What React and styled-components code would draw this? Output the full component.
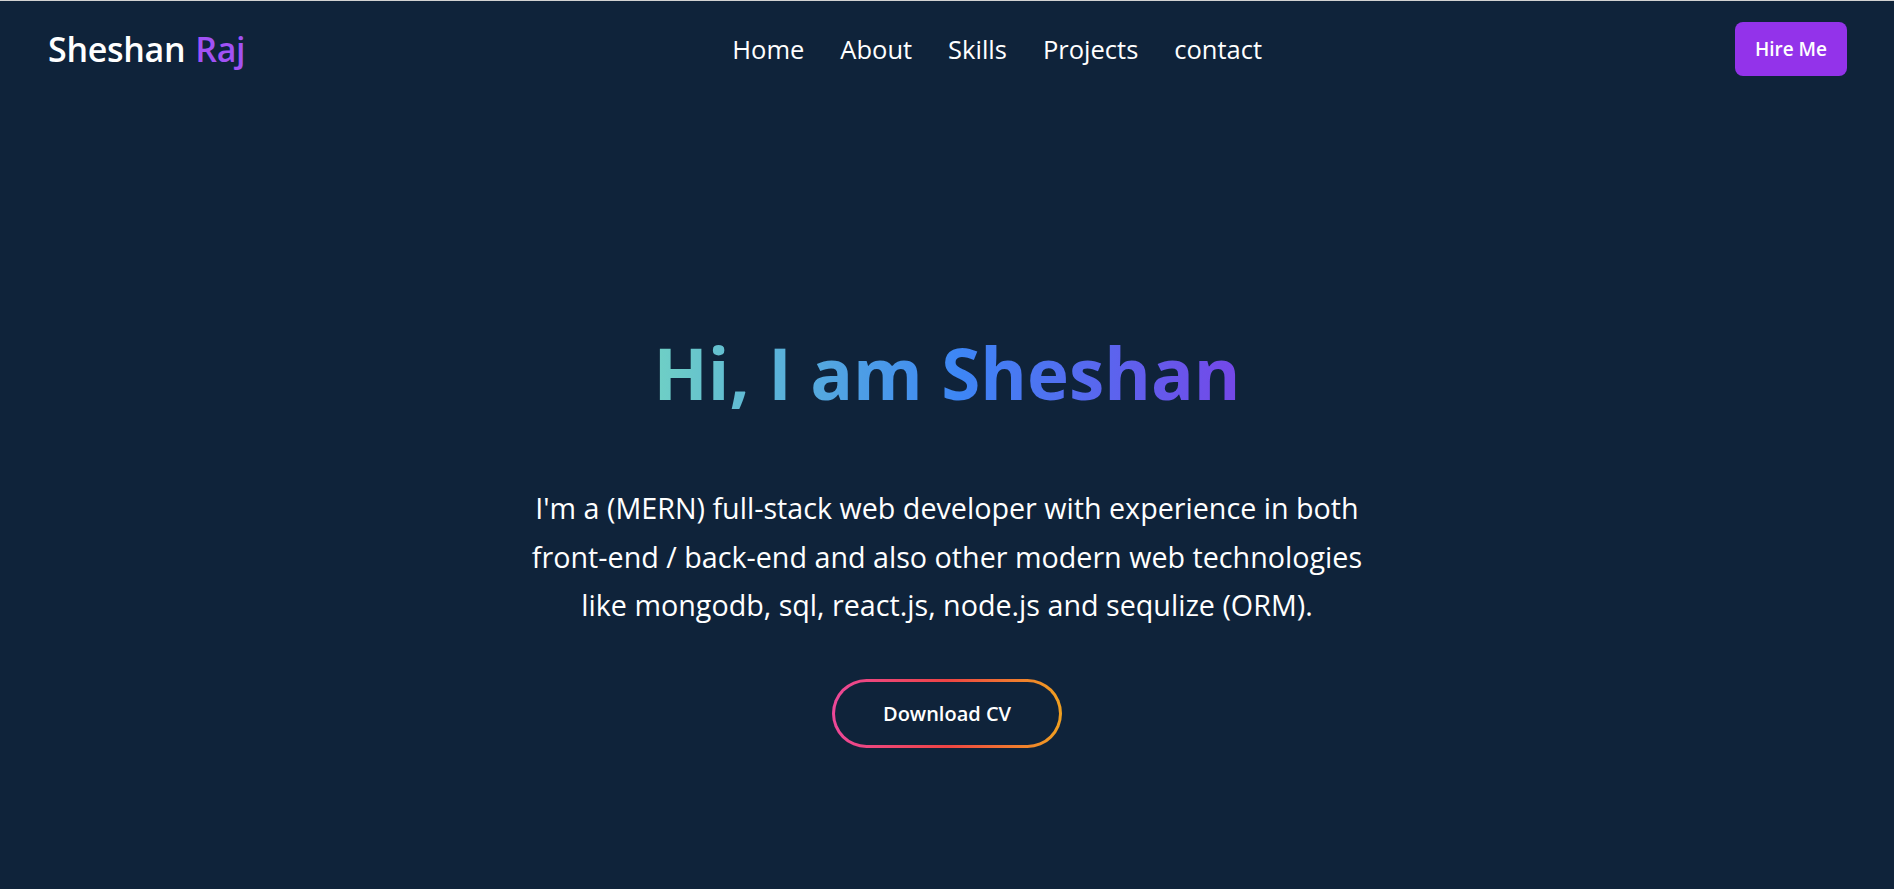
import React from "react";
import styled, { createGlobalStyle } from "styled-components";

const Global = createGlobalStyle`
  html, body { margin: 0; padding: 0; }
  body {
    background: #0f233a;
    border-top: 1px solid #d2d2d2;
    font-family: "Open Sans", "Noto Sans", sans-serif;
    color: #ffffff;
    min-height: 888px;
  }
  * { box-sizing: border-box; }
`;

const Page = styled.div`
  min-height: 888px;
  background: #0f233a;
  display: flex;
  flex-direction: column;
`;

const Header = styled.header`
  display: flex;
  align-items: center;
  padding: 21px 47px 21px 48px;
`;

const Logo = styled.div`
  font-size: 34px;
  font-weight: 600;
  letter-spacing: -0.3px;
  white-space: nowrap;
`;

const Accent = styled.span`
  color: #a152f5;
  margin-left: 10px;
`;

const Nav = styled.nav`
  flex: 1;
  display: flex;
  justify-content: center;
  gap: 36px;
  padding-left: 14px;
`;

const NavLink = styled.a`
  font-size: 25.5px;
  color: #ffffff;
  text-decoration: none;
`;

const HireButton = styled.button`
  width: 112px;
  height: 54px;
  border: none;
  border-radius: 8px;
  background: #9333ea;
  color: #ffffff;
  font-family: inherit;
  font-size: 19px;
  font-weight: 600;
  cursor: pointer;
`;

const Hero = styled.main`
  display: flex;
  flex-direction: column;
  align-items: center;
  padding-top: 230px;
`;

const Title = styled.h1`
  margin: 0;
  font-size: 71px;
  font-weight: 700;
  line-height: 1.3;
  background: linear-gradient(to right, #6fd0c5 0%, #3d86f5 52%, #7547e8 100%);
  -webkit-background-clip: text;
  background-clip: text;
  color: transparent;
`;

const Intro = styled.p`
  margin: 65px 0 0;
  font-size: 28.7px;
  line-height: 48.5px;
  text-align: center;
`;

const CvButton = styled.button`
  margin-top: 49px;
  width: 230px;
  height: 69px;
  border-radius: 999px;
  border: 3px solid transparent;
  background:
    linear-gradient(#0f233a, #0f233a) padding-box,
    linear-gradient(to right, #ec4899, #ef4444 50%, #f0a020) border-box;
  color: #ffffff;
  font-family: inherit;
  font-size: 20px;
  font-weight: 600;
  cursor: pointer;
`;

const links = ["Home", "About", "Skills", "Projects", "contact"];

export default function App() {
  return (
    <Page>
      <Global />
      <Header>
        <Logo>
          Sheshan<Accent>Raj</Accent>
        </Logo>
        <Nav>
          {links.map((l) => (
            <NavLink key={l} href="#">
              {l}
            </NavLink>
          ))}
        </Nav>
        <HireButton>Hire Me</HireButton>
      </Header>
      <Hero>
        <Title>Hi, I am Sheshan</Title>
        <Intro>
          I'm a (MERN) full-stack web developer with experience in both
          <br />
          front-end / back-end and also other modern web technologies
          <br />
          like mongodb, sql, react.js, node.js and sequlize (ORM).
        </Intro>
        <CvButton>Download CV</CvButton>
      </Hero>
    </Page>
  );
}
